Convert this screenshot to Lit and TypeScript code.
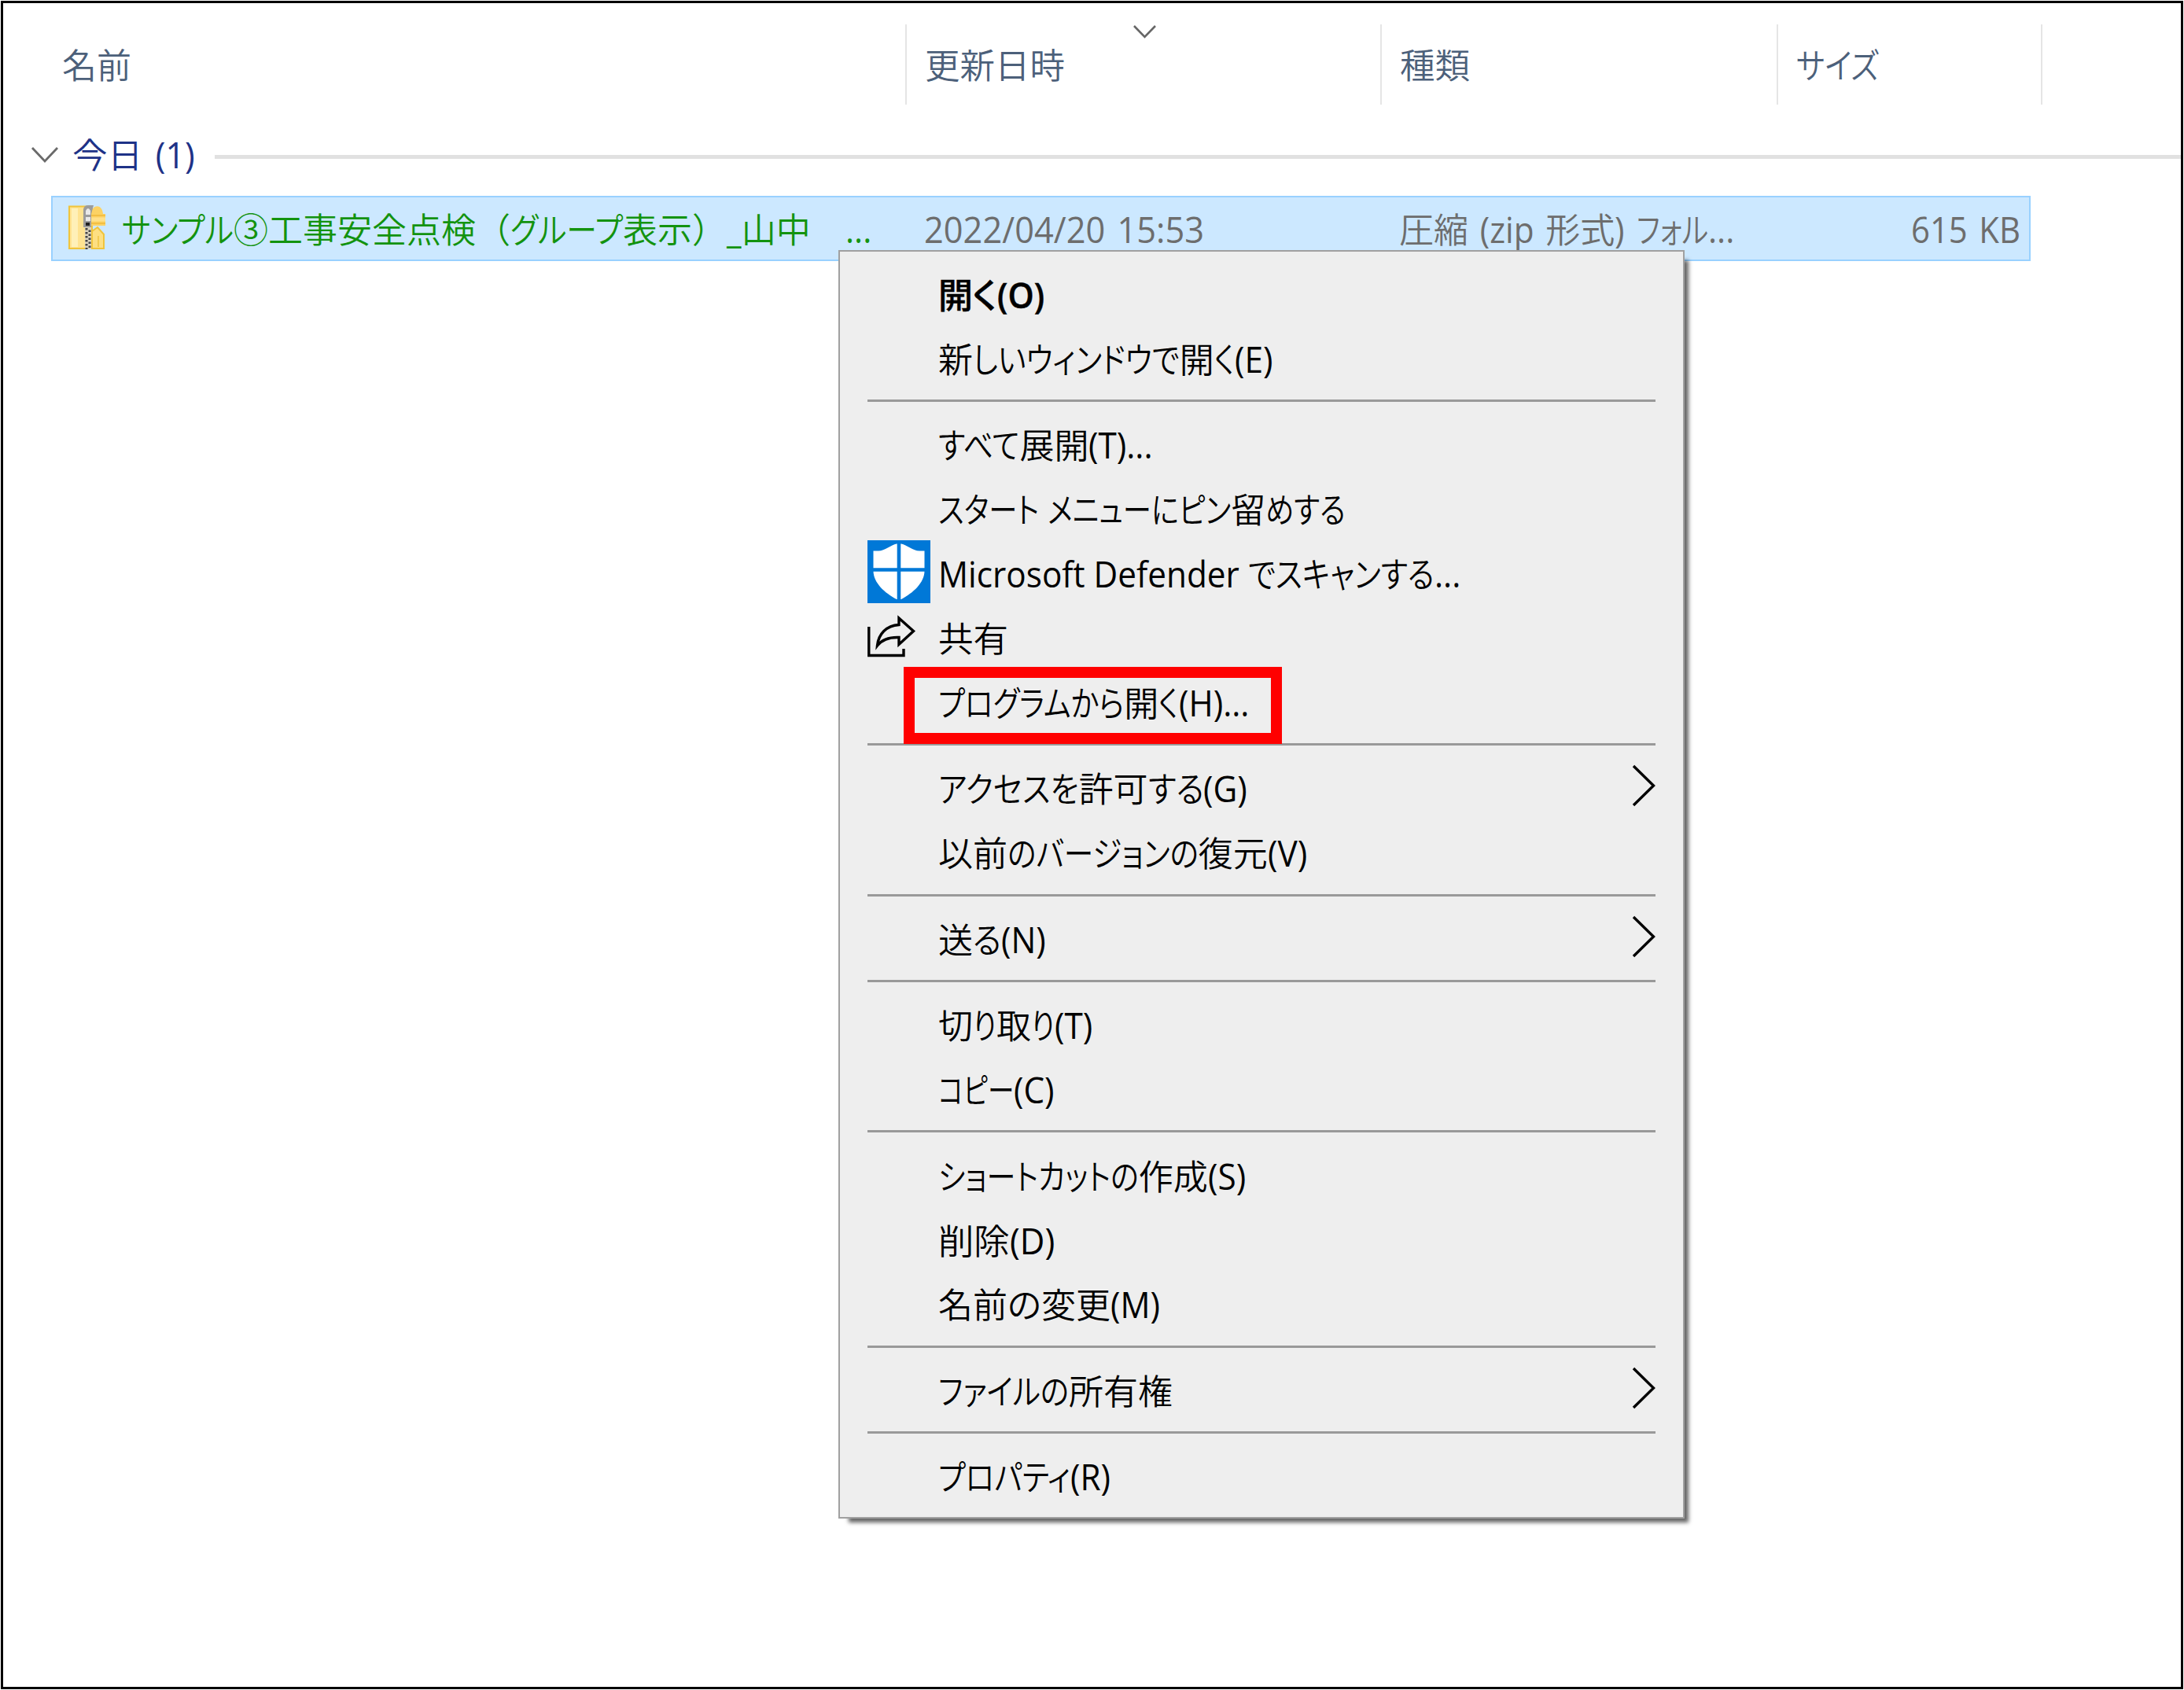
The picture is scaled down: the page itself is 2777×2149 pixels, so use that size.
import { html, css, svg, nothing, LitElement } from 'lit';
import { customElement, property, state } from 'lit/decorators.js';
import { classMap } from 'lit/directives/class-map.js';
import { styleMap } from 'lit/directives/style-map.js';

type Run = { kind: 'kana' | 'latin' | 'kanji'; text: string };

/** Splits a label into runs of kana, latin and everything else. */
function splitRuns(text: string): Run[] {
  const parts = text.match(/[\u3040-\u30ff]+|[\x20-\x7e]+|[^\u3040-\u30ff\x20-\x7e]+/g) ?? [];
  return parts.map((part) => {
    if (/^[\u3040-\u30ff]/.test(part)) return { kind: 'kana', text: part };
    if (/^[\x20-\x7e]/.test(part)) return { kind: 'latin', text: part };
    return { kind: 'kanji', text: part };
  });
}

/**
 * <ui-label> is a single line of UI text with condensed kana.
 * The kana take up the slack, so that the line is `width` pixels long.
 */
@customElement('ui-label')
class UiLabel extends LitElement {
  @property() text = '';
  @property({ type: Number }) width = 0;
  @state() private sizes: number[] = [];

  static styles = css`
    :host {
      display: block;
      white-space: pre;
      line-height: 60px;
    }

    .line {
      display: block;
    }

    .run {
      display: inline-block;
      transform-origin: left;
    }

    .kana,
    .kanji {
      font-family: 'Noto Sans CJK JP', sans-serif;
      font-size: 44px;
      font-weight: var(--cjk-weight, 350);
    }

    .kana {
      font-feature-settings: 'palt';
    }

    .latin {
      font-family: 'Open Sans', 'Noto Sans', sans-serif;
      font-size: 45px;
      font-weight: var(--latin-weight, 400);
    }
  `;

  firstUpdated() {
    const runs = Array.from(this.renderRoot.querySelectorAll('.run'));
    this.sizes = runs.map((run) => run.getBoundingClientRect().width);
  }

  private scales(runs: Run[]): number[] {
    const base = runs.map((run) => (run.kind === 'latin' ? 0.94 : 1));
    if (!this.sizes.length || !this.width) return base;
    const flexible = runs.some((run) => run.kind === 'kana') ? 'kana' : null;
    let fixed = 0;
    let free = 0;
    runs.forEach((run, i) => {
      if (flexible === null || run.kind === flexible) free += this.sizes[i] * base[i];
      else fixed += this.sizes[i] * base[i];
    });
    const ratio = (this.width - fixed) / free;
    return base.map((s, i) => (flexible === null || runs[i].kind === flexible ? s * ratio : s));
  }

  render() {
    const runs = splitRuns(this.text);
    const scales = this.scales(runs);
    return html`<span class="line">${runs.map((run, i) => {
      const style = this.sizes.length
        ? { width: `${this.sizes[i] * scales[i]}px`, transform: `scaleX(${scales[i]})` }
        : {};
      return html`<span class="run ${run.kind}" style=${styleMap(style)}>${run.text}</span>`;
    })}</span>`;
  }
}

const chevronRight = svg`<path d="M3 2 L28.500 27 L3 52" fill="none" stroke="#000" stroke-width="3.400" />`;

const defenderIcon = html`
  <svg width="80" height="80" viewBox="0 0 80 80">
    <rect width="80" height="80" fill="#0078d7" />
    <path
      d="M7.500 13.500 H14 C22 13.500 30 6 37 4.500 H43 C50 6 58 13.500 66 13.500 H72.500 V39 C72.500 54 58 67 43 75 H37 C22 67 7.500 54 7.500 39 Z"
      fill="#fff"
    />
    <path d="M40 2 V78 M5 37.500 H75" stroke="#0078d7" stroke-width="4.600" />
  </svg>
`;

const shareIcon = html`
  <svg width="62" height="56" viewBox="0 0 62 56" fill="none" stroke="#000" stroke-width="3.400">
    <path d="M1.800 15 V51.500 H46 V43" />
    <path d="M40 4 L58.500 20.500 L40 37.500 V28.500 C26 28 18 32 12.500 39 C14 24 24 13.500 40 12.500 Z" />
  </svg>
`;

const zipIcon = html`
  <svg class="zip" width="50" height="58" viewBox="0 0 50 58">
    <path d="M1 2.500 H30 V56 H1 Z" fill="#ffe391" stroke="#f0c43c" stroke-width="2" />
    <path d="M4 5 H12 V54 H4 Z" fill="#fff0b8" />
    <path d="M30 34 L37 29 L45 38 V56 H30 Z" fill="#fddf82" stroke="#f0c43c" stroke-width="2" />
    <path d="M38 40 V54" stroke="#f3cb52" stroke-width="2" />
    <path d="M29 12 C30 -1 43 -1 44 12 H47 V27 H29 Z" fill="#fcd264" />
    <path d="M29 14 H47 M29 24 H47" stroke="#f0b93a" stroke-width="1.500" />
    <path d="M29 19 H47" stroke="#ffe08a" stroke-width="5" />
    <path d="M21 28 H29 V57 H21 Z" fill="#ddd5c0" />
    <path d="M23 30 V57" stroke="#444" stroke-width="3" stroke-dasharray="2.500 2.500" />
    <path d="M27 32.500 V57" stroke="#444" stroke-width="3" stroke-dasharray="2.500 2.500" />
    <path d="M19 6 Q20 1 25 1 H32 L29 12 V29 H19 Z" fill="#9c9c9c" />
    <path d="M22 8 Q25 2 28 8 V13 H22 Z M22 16 H28 V21 H22 Z" fill="#e9e9e9" />
    <path d="M22 23 H27 V27 H22 Z" fill="#222" />
  </svg>
`;

type Item = {
  text: string;
  width: number;
  bold?: boolean;
  submenu?: boolean;
  marked?: boolean;
  icon?: unknown;
};

const GROUPS: Item[][] = [
  [
    { text: '開く(O)', width: 135, bold: true },
    { text: '新しいウィンドウで開く(E)', width: 425 },
  ],
  [
    { text: 'すべて展開(T)...', width: 273 },
    { text: 'スタート メニューにピン留めする', width: 518 },
    { text: 'Microsoft Defender でスキャンする...', width: 664, icon: defenderIcon },
    { text: '共有', width: 89, icon: shareIcon },
    { text: 'プログラムから開く(H)...', width: 395, marked: true },
  ],
  [
    { text: 'アクセスを許可する(G)', width: 393, submenu: true },
    { text: '以前のバージョンの復元(V)', width: 469 },
  ],
  [{ text: '送る(N)', width: 137, submenu: true }],
  [
    { text: '切り取り(T)', width: 196 },
    { text: 'コピー(C)', width: 148 },
  ],
  [
    { text: 'ショートカットの作成(S)', width: 391 },
    { text: '削除(D)', width: 148 },
    { text: '名前の変更(M)', width: 282 },
  ],
  [{ text: 'ファイルの所有権', width: 298, submenu: true }],
  [{ text: 'プロパティ(R)', width: 219 }],
];

/** <context-menu> is the menu of the selected file. */
@customElement('context-menu')
class ContextMenu extends LitElement {
  static styles = css`
    :host {
      display: block;
      box-sizing: border-box;
      width: 1076px;
      padding: 12px 35px 12px;
      background: #eee;
      border: 2px solid #a0a0a0;
      box-shadow: 9px 9px 5px -4px rgba(0, 0, 0, 0.6);
      color: #000;
    }

    .item {
      position: relative;
      display: grid;
      grid-template-columns: 90px 1fr 31px;
      height: 81.9px;
    }

    .icon svg {
      display: block;
    }

    .share {
      padding-top: 13px;
    }

    .label {
      padding-top: 11px;
    }

    .bold {
      --cjk-weight: 500;
      --latin-weight: 600;
      -webkit-text-stroke: 0.5px #000;
    }

    .arrow {
      padding-top: 12px;
    }

    .separator {
      display: flex;
      align-items: center;
      height: 27.6px;
    }

    .separator::before {
      content: '';
      flex: 1;
      height: 3px;
      background: #999;
    }

    .mark {
      position: absolute;
      left: 46px;
      top: -3px;
      box-sizing: border-box;
      width: 481px;
      height: 98px;
      border: 14px solid #f00;
    }
  `;

  private renderItem(item: Item) {
    return html`
      <div class="item">
        <div class=${classMap({ icon: true, share: item.icon === shareIcon })}>${item.icon ?? nothing}</div>
        <ui-label
          class=${classMap({ label: true, bold: !!item.bold })}
          .text=${item.text}
          .width=${item.width}
        ></ui-label>
        ${item.submenu
          ? html`<svg class="arrow" width="31" height="54" viewBox="0 0 31 54">${chevronRight}</svg>`
          : nothing}
        ${item.marked ? html`<div class="mark"></div>` : nothing}
      </div>
    `;
  }

  render() {
    return GROUPS.map(
      (group, i) => html`
        ${i > 0 ? html`<div class="separator"></div>` : nothing}
        ${group.map((item) => this.renderItem(item))}
      `
    );
  }
}

/** File list with one selected file and its open context menu. */
@customElement('app-root')
class AppRoot extends LitElement {
  static styles = css`
    :host {
      position: relative;
      display: block;
      box-sizing: border-box;
      width: 2777px;
      height: 2149px;
      padding: 1px;
      background: #fff;
      overflow: hidden;
    }

    .frame {
      box-sizing: border-box;
      width: 2775px;
      height: 2147px;
      padding-top: 27px;
      border: 3px solid #000;
    }

    .header,
    .row {
      display: grid;
    }

    .header {
      grid-template-columns: 1149px 604px 504px 336px;
      height: 102px;
      color: #4c607a;
    }

    .cell {
      position: relative;
      padding: 20px 0 0 23px;
      border-right: 2px solid #e5e5e5;
    }

    .cell:first-child {
      padding-left: 75px;
    }

    .sort {
      position: absolute;
      left: 287px;
      top: 0;
    }

    .group {
      display: flex;
      align-items: center;
      height: 80px;
      margin-top: 24px;
      padding-left: 35px;
      color: #1e3287;
      word-spacing: 6px;
    }

    .group ui-label {
      width: 156px;
      padding-top: 9px;
      margin: 0 25px 0 17px;
    }

    .rule {
      flex: 1;
      height: 5px;
      margin-top: 5px;
      background: #e1e1e1;
    }

    .row {
      box-sizing: border-box;
      grid-template-columns: 68px 1020px 604px 504px 1fr;
      width: 2517px;
      height: 83px;
      margin: 12px 0 0 61px;
      padding: 9px 0 0 20px;
      background: #cce8ff;
      border: 2px solid #99d1ff;
      color: #6d6d6d;
      word-spacing: 4px;
    }

    .name {
      color: #13930f;
    }

    .date,
    .size {
      padding-top: 2px;
    }

    .size {
      padding-left: 147px;
    }

    context-menu {
      position: absolute;
      left: 1066px;
      top: 318px;
    }
  `;

  render() {
    return html`
      <div class="frame">
        <div class="header">
          <div class="cell"><ui-label text="名前" width="88"></ui-label></div>
          <div class="cell">
            <svg class="sort" width="32" height="20" viewBox="0 0 32 20">
              <path d="M2 2 L15.500 16 L29 2" fill="none" stroke="#666" stroke-width="2.600" />
            </svg>
            <ui-label text="更新日時" width="178"></ui-label>
          </div>
          <div class="cell"><ui-label text="種類" width="89"></ui-label></div>
          <div class="cell"><ui-label text="サイズ" width="105"></ui-label></div>
        </div>

        <div class="group">
          <svg width="36" height="22" viewBox="0 0 36 22">
            <path d="M2 2 L18 19 L34 2" fill="none" stroke="#6a6a6a" stroke-width="2.800" />
          </svg>
          <ui-label text="今日 (1)" width="156"></ui-label>
          <div class="rule"></div>
        </div>

        <div class="row">
          ${zipIcon}
          <ui-label class="name" text="サンプル③工事安全点検（グループ表示）_山中　..." width="953"></ui-label>
          <ui-label class="date" text="2022/04/20 15:53" width="356"></ui-label>
          <ui-label text="圧縮 (zip 形式) フォル..." width="426"></ui-label>
          <ui-label class="size" text="615 KB" width="139"></ui-label>
        </div>
      </div>
      <context-menu></context-menu>
    `;
  }
}
